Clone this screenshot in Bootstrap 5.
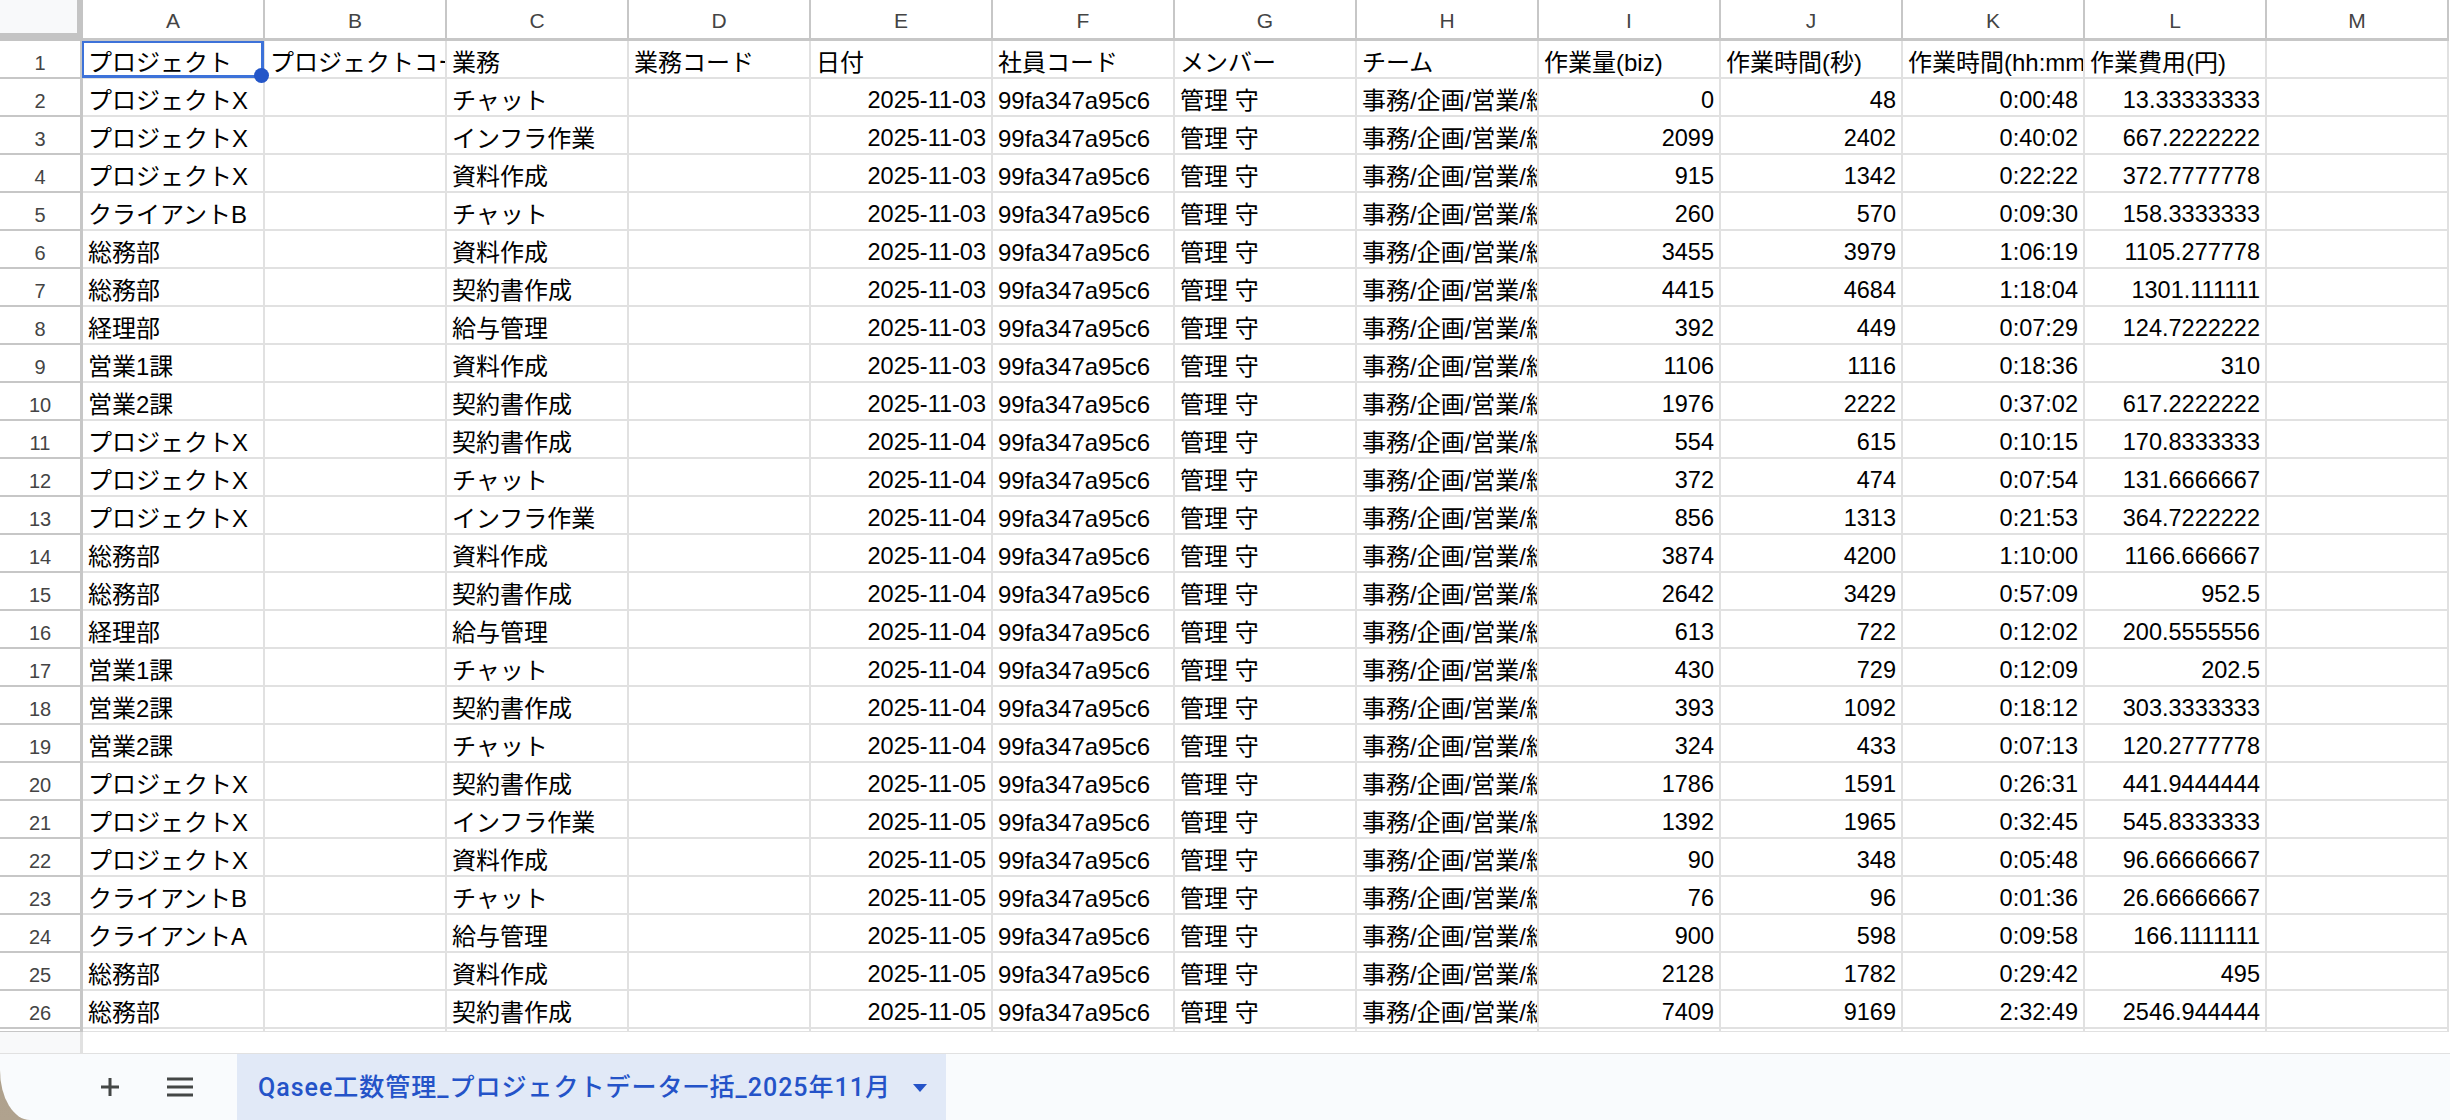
<!DOCTYPE html>
<html lang="ja">
<head>
  <meta charset="UTF-8">
  <meta name="viewport" content="width=device-width, initial-scale=1">
  <title>Qasee工数管理_プロジェクトデータ一括_2025年11月</title>
  <link href="https://cdn.jsdelivr.net/npm/bootstrap@5.3.0/dist/css/bootstrap.min.css" rel="stylesheet">
  <style>
    html, body { height: 100%; }
    body {
      background: linear-gradient(#8f8270, #b0a28e);
      font-family: "Liberation Sans", "Noto Sans CJK JP", sans-serif;
      overflow: hidden;
    }
    .sheet-pane { background: #fff; }
    .sheet-grid { width: 2449px; table-layout: fixed; border-collapse: separate; border-spacing: 0; margin: 0; }
    .sheet-grid > thead > tr > th,
    .sheet-grid > tbody > tr > th,
    .sheet-grid > tbody > tr > td {
      padding: 8px 5px 0 5px;
      line-height: 1;
      overflow: hidden;
      white-space: nowrap;
      vertical-align: middle;
      background: #fff;
      box-shadow: none;
    }
    .sheet-grid > tbody > tr > td {
      height: 38px;
      font-size: 24px;
      color: #000;
      border-width: 0 2px 2px 0;
      border-style: solid;
      border-color: #e1e1e1;
    }
    .sheet-grid > thead > tr > th {
      height: 41px;
      padding-top: 2px;
      font-size: 21px;
      font-weight: 400;
      color: #444;
      text-align: center;
      border-width: 0 2px 3px 0;
      border-style: solid;
      border-color: #c7c7c7;
    }
    .sheet-grid > tbody > tr > th {
      height: 38px;
      font-size: 20px;
      font-weight: 400;
      color: #444;
      text-align: center;
      padding: 8px 0 0;
      border-width: 0 3px 2px 0;
      border-style: solid;
      border-color: #c7c7c7;
    }
    .sheet-grid > thead > tr > th.corner-cell {
      background: #f8f9fa;
      border-width: 0 6px 8px 0;
      border-color: #c4c4c4;
    }
    .sheet-grid > tbody > tr > td.num-cell { text-align: right; font-size: 23.5px; }
    .sheet-grid > tbody > tr.stub-row > td,
    .sheet-grid > tbody > tr.stub-row > th { height: 3px; padding: 0; font-size: 0; border-bottom-width: 1px; }
    .sheet-grid > tbody > tr > td.selected-cell { overflow: visible; }
    .cell-clip { display: block; overflow: hidden; }
    .select-box {
      position: absolute;
      inset: 0 -1px -1px -1px;
      border: 2px solid #3d72d9;
      border-width: 2px 3px 3px 2px;
      pointer-events: none;
    }
    .select-handle {
      position: absolute;
      right: -8px;
      bottom: -8px;
      width: 15px;
      height: 15px;
      border-radius: 50%;
      background: #2456c8;
    }
    .sheet-blank { flex: 1 1 auto; min-height: 0; }
    .blank-head { width: 83px; background: #f8f9fa; border-right: 3px solid #e1e1e1; }
    .tab-footer {
      height: 67px;
      flex: none;
      background: #f9fbfd;
      border-top: 1px solid #e1e1e1;
      border-bottom-left-radius: 30px 50px;
    }
    .footer-tools { width: 237px; padding-left: 100px; gap: 47px; }
    .sheet-tab {
      width: 709px;
      padding-left: 21px;
      padding-top: 2px;
      background: #e1e9f7;
      color: #2453c8;
      font-family: "Roboto", "Noto Sans CJK JP", sans-serif;
      font-size: 25px;
      font-weight: 500;
      letter-spacing: 1px;
    }
    .tab-caret {
      width: 0; height: 0;
      margin-left: 22px;
      border-left: 7px solid transparent;
      border-right: 7px solid transparent;
      border-top: 8px solid #2453c8;
    }
  </style>
</head>
<body class="d-flex flex-column">
  <div class="sheet-pane flex-grow-1 d-flex flex-column overflow-hidden">
    <table class="table sheet-grid">
      <colgroup id="cols"></colgroup>
      <thead><tr id="letters"></tr></thead>
      <tbody id="rows"></tbody>
    </table>
    <div class="sheet-blank d-flex"><div class="blank-head"></div></div>
  </div>

  <div class="tab-footer d-flex">
    <div class="footer-tools d-flex align-items-center">
      <svg width="20" height="20" viewBox="0 0 20 20"><path d="M10 1v18M1 10h18" stroke="#444746" stroke-width="3" fill="none"/></svg>
      <svg width="26" height="20" viewBox="0 0 26 20"><path d="M0 2h26M0 10h26M0 18h26" stroke="#444746" stroke-width="3" fill="none"/></svg>
    </div>
    <div class="sheet-tab d-flex align-items-center">
      <span>Qasee工数管理_プロジェクトデータ一括_2025年11月</span>
      <span class="tab-caret"></span>
    </div>
  </div>

  <script src="https://cdn.jsdelivr.net/npm/bootstrap@5.3.0/dist/js/bootstrap.bundle.min.js"></script>
  <script>
    const X = 'プロジェクトX';
    const heading = ['プロジェクト', 'プロジェクトコード', '業務', '業務コード', '日付', '社員コード', 'メンバー', 'チーム', '作業量(biz)', '作業時間(秒)', '作業時間(hh:mm:ss)', '作業費用(円)', ''];
    // project, task, day, biz, seconds, hh:mm:ss, cost
    const data = [
      [X, 'チャット', 3, 0, 48, '0:00:48', '13.33333333'],
      [X, 'インフラ作業', 3, 2099, 2402, '0:40:02', '667.2222222'],
      [X, '資料作成', 3, 915, 1342, '0:22:22', '372.7777778'],
      ['クライアントB', 'チャット', 3, 260, 570, '0:09:30', '158.3333333'],
      ['総務部', '資料作成', 3, 3455, 3979, '1:06:19', '1105.277778'],
      ['総務部', '契約書作成', 3, 4415, 4684, '1:18:04', '1301.111111'],
      ['経理部', '給与管理', 3, 392, 449, '0:07:29', '124.7222222'],
      ['営業1課', '資料作成', 3, 1106, 1116, '0:18:36', '310'],
      ['営業2課', '契約書作成', 3, 1976, 2222, '0:37:02', '617.2222222'],
      [X, '契約書作成', 4, 554, 615, '0:10:15', '170.8333333'],
      [X, 'チャット', 4, 372, 474, '0:07:54', '131.6666667'],
      [X, 'インフラ作業', 4, 856, 1313, '0:21:53', '364.7222222'],
      ['総務部', '資料作成', 4, 3874, 4200, '1:10:00', '1166.666667'],
      ['総務部', '契約書作成', 4, 2642, 3429, '0:57:09', '952.5'],
      ['経理部', '給与管理', 4, 613, 722, '0:12:02', '200.5555556'],
      ['営業1課', 'チャット', 4, 430, 729, '0:12:09', '202.5'],
      ['営業2課', '契約書作成', 4, 393, 1092, '0:18:12', '303.3333333'],
      ['営業2課', 'チャット', 4, 324, 433, '0:07:13', '120.2777778'],
      [X, '契約書作成', 5, 1786, 1591, '0:26:31', '441.9444444'],
      [X, 'インフラ作業', 5, 1392, 1965, '0:32:45', '545.8333333'],
      [X, '資料作成', 5, 90, 348, '0:05:48', '96.66666667'],
      ['クライアントB', 'チャット', 5, 76, 96, '0:01:36', '26.66666667'],
      ['クライアントA', '給与管理', 5, 900, 598, '0:09:58', '166.1111111'],
      ['総務部', '資料作成', 5, 2128, 1782, '0:29:42', '495'],
      ['総務部', '契約書作成', 5, 7409, 9169, '2:32:49', '2546.944444']
    ];

    const letters = 'ABCDEFGHIJKLM'.split('');
    document.getElementById('cols').innerHTML = '<col style="width:83px">' + letters.map(() => '<col style="width:182px">').join('');
    document.getElementById('letters').innerHTML = '<th class="corner-cell"></th>' + letters.map(l => `<th>${l}</th>`).join('');

    const cell = (v, num) => `<td class="${num ? 'num-cell' : ''}">${v}</td>`;
    const first = `<tr><th>1</th>
      <td class="selected-cell position-relative"><span class="cell-clip">${heading[0]}</span><div class="select-box"><div class="select-handle"></div></div></td>
      ${heading.slice(1).map(h => cell(h)).join('')}</tr>`;
    const body = data.map((r, i) => `<tr><th>${i + 2}</th>` +
      cell(r[0]) + cell('') + cell(r[1]) + cell('') +
      cell(`2025-11-0${r[2]}`, true) + cell('99fa347a95c6') + cell('管理 守') + cell('事務/企画/営業/総務') +
      cell(r[3], true) + cell(r[4], true) + cell(r[5], true) + cell(r[6], true) + cell('') + '</tr>').join('');
    const stub = '<tr class="stub-row"><th></th>' + letters.map(() => '<td></td>').join('') + '</tr>';
    document.getElementById('rows').innerHTML = first + body + stub;
  </script>
</body>
</html>
